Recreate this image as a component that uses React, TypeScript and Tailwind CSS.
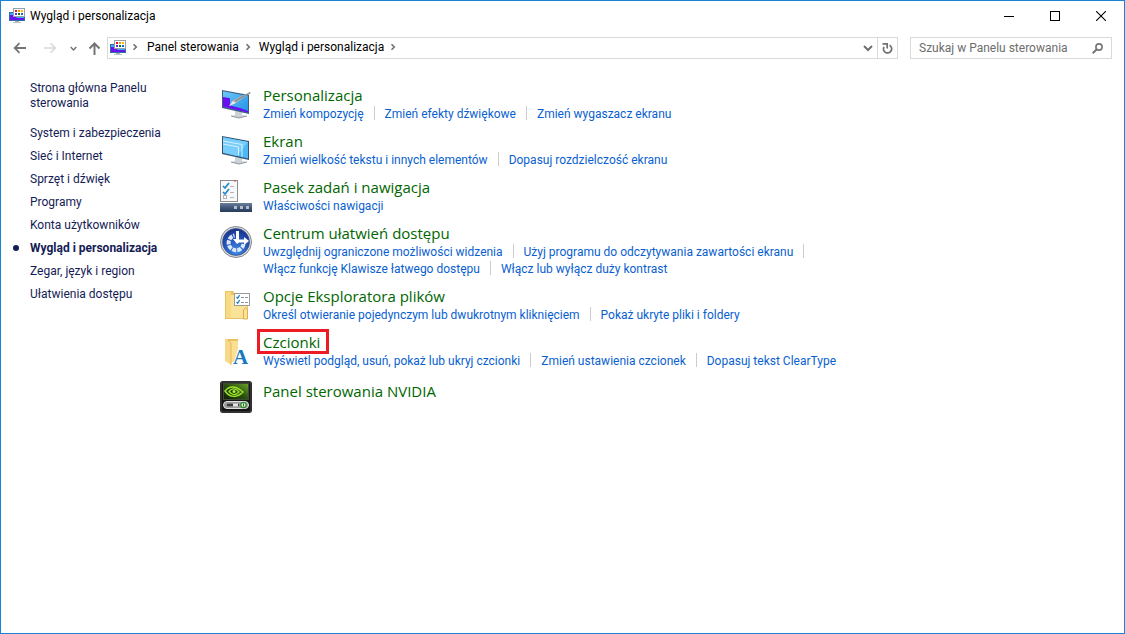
import { useState } from 'react';
import type { ReactNode } from 'react';

type Category = {
  title: string;
  icon: ReactNode;
  links: string[];
  marked?: boolean;
};

const sidebarLinks = [
  'System i zabezpieczenia',
  'Sieć i Internet',
  'Sprzęt i dźwięk',
  'Programy',
  'Konta użytkowników',
  'Wygląd i personalizacja',
  'Zegar, język i region',
  'Ułatwienia dostępu',
];

function PanelIcon() {
  return (
    <svg width="16" height="16" viewBox="0 0 16 16" className="shrink-0" aria-hidden="true">
      <rect x="0" y="4" width="16" height="9" fill="#2f6f9f" />
      <rect x="1" y="5" width="14" height="7" fill="#35b0f5" />
      <path d="M1 7h4l3 3h7v2H1z" fill="#6a11f0" />
      <rect x="6" y="13" width="4" height="1" fill="#9fb2bf" />
      <rect x="4" y="14" width="8" height="1" fill="#b9c4cc" />
      <rect x="4.5" y="0.5" width="11" height="8" fill="#fff" stroke="#98a0a8" />
      <rect x="6" y="2" width="2" height="2" fill="#e81123" />
      <rect x="9" y="2" width="2" height="2" fill="#ff8c00" />
      <rect x="12" y="2" width="2" height="2" fill="#ffb900" />
      <rect x="6" y="5" width="2" height="2" fill="#5b2ee0" />
      <rect x="9" y="5" width="2" height="2" fill="#107c10" />
      <rect x="12" y="5" width="2" height="2" fill="#1464d2" />
    </svg>
  );
}

function Chevron() {
  return (
    <svg width="6" height="8" viewBox="0 0 6 8" className="shrink-0" aria-hidden="true">
      <path d="M1.5 1.2 4.3 4 1.5 6.8" fill="none" stroke="#707070" strokeWidth="1.6" />
    </svg>
  );
}

function ChevronDown({ size }: { size: number }) {
  return (
    <svg width={size} height={size} viewBox="0 0 10 10" aria-hidden="true">
      <path d="m1 3 4 4 4-4" fill="none" stroke="#707070" strokeWidth="2" />
    </svg>
  );
}

function MonitorStand() {
  return (
    <>
      <path d="m15 23 7 1v3l5 1-8 2-8-2 4-1z" fill="#cdd2d6" />
      <path d="m11 28 8 2 8-2" fill="none" stroke="#8d969e" />
    </>
  );
}

function PersonalizationIcon() {
  return (
    <svg width="32" height="32" viewBox="0 0 32 32" aria-hidden="true">
      <defs>
        <linearGradient id="screen" x1="0" y1="0" x2="1" y2="1">
          <stop offset="0" stopColor="#6cc8fa" />
          <stop offset="1" stopColor="#2391e6" />
        </linearGradient>
      </defs>
      <MonitorStand />
      <path d="M2 2 29 7v19L2 20z" fill="#3c5f7c" />
      <path d="M3 3.3 28 8v16.500L3 18.800z" fill="url(#screen)" />
      <path d="m3 9 7 1.200v7.300l10 2.500 8 3v1.500L3 18.800z" fill="#6a0df0" />
      <path d="m9 18 4-6L30 4l1 1-15 10z" fill="#a7afb6" />
      <path d="m9 18 4-5 3 2z" fill="#e8ebee" />
      <path d="m15 13 15-8" stroke="#66717a" strokeWidth=".7" />
    </svg>
  );
}

function DisplayIcon() {
  return (
    <svg width="32" height="32" viewBox="0 0 32 32" aria-hidden="true">
      <MonitorStand />
      <path d="M2 2 29 7v19L2 20z" fill="#34536c" />
      <path d="M3 3.300 28 8v16.500L3 18.800z" fill="#4db8f5" />
      <path d="m3 3.300 25 4.700-11 14-14-3.200z" fill="#79cdfa" />
      <path d="m3 7 19 3.500v12.300M3 10l15.500 3v8.500" fill="none" stroke="#d8f1ff" />
    </svg>
  );
}

function TaskbarIcon() {
  return (
    <svg width="32" height="32" viewBox="0 0 32 32" aria-hidden="true">
      <defs>
        <linearGradient id="taskbar" x2="0" y2="1">
          <stop offset="0" stopColor="#6b7f99" />
          <stop offset=".5" stopColor="#41587a" />
          <stop offset="1" stopColor="#263a58" />
        </linearGradient>
      </defs>
      <rect x=".5" y=".5" width="17" height="21" fill="#f7f8f9" stroke="#8c8c8c" />
      <path d="M14 1h2" stroke="#d24b3e" />
      <path d="m3 6 2 2 4-5M3 12l2 2 4-5" fill="none" stroke="#2288c9" strokeWidth="1.700" />
      <rect x="3.500" y="15.500" width="3" height="3" fill="#fff" stroke="#b3b3b3" />
      <path d="M10 6.500h4M10 12.500h4M10 17.500h4" stroke="#b5b5b5" />
      <rect y="23" width="32" height="9" fill="url(#taskbar)" />
      <path d="M14 26h3v3h-3zM20 26h3v3h-3zM26 26h3v3h-3z" fill="#b3bdca" />
    </svg>
  );
}

function EaseOfAccessIcon() {
  return (
    <svg width="32" height="32" viewBox="0 0 32 32" aria-hidden="true">
      <defs>
        <radialGradient id="ease" cx=".5" cy=".85" r=".8">
          <stop offset="0" stopColor="#3f8ae8" />
          <stop offset=".6" stopColor="#2452b8" />
          <stop offset="1" stopColor="#1b3690" />
        </radialGradient>
      </defs>
      <circle cx="16" cy="16" r="15.500" fill="#d7dadd" stroke="#858b92" />
      <circle cx="16" cy="16" r="13.500" fill="url(#ease)" stroke="#3d4f7c" strokeWidth=".7" />
      <path
        d="M23.500 18a7.500 7.500 0 1 1-9-8.500"
        fill="none"
        stroke="#dce8f6"
        strokeWidth="4"
        strokeDasharray="4 1.100"
      />
      <path d="M16 5h3v8.500h5V11l5 4-5 4v-2.500h-5L17 18l-4-5h3z" fill="#fff" />
    </svg>
  );
}

function ExplorerOptionsIcon() {
  return (
    <svg width="32" height="32" viewBox="0 0 32 32" aria-hidden="true">
      <path d="M5 2h8l2 3h13v25H5z" fill="#e9c35f" />
      <path d="M6 3h5v26H6z" fill="#f7da85" />
      <path d="M11 6h16v23H11z" fill="#fbe299" />
      <path d="M23.500 30v-9l2-2.500 2 2.500v9z" fill="#fbe299" stroke="#dfb14c" />
      <rect x="14.500" y="4.500" width="15" height="12" fill="#fff" stroke="#9a9a9a" />
      <path d="m16.500 8 1.200 1.200 2-3M16.500 13l1.200 1.200 2-3" fill="none" stroke="#2080c4" strokeWidth="1.200" />
      <path d="M21 8.500h3M25 8.500h3M21 13.500h3M25 13.500h3" stroke="#8c959d" />
    </svg>
  );
}

function FontsIcon() {
  return (
    <svg width="32" height="32" viewBox="0 0 32 32" className="overflow-visible" aria-hidden="true">
      <path d="M8 4h10v9l-4 12-3 3z" fill="#eac162" />
      <path d="M10 6h8v7l-4 14h-4z" fill="#fbe093" />
      <path d="M5 4h2l4 4v22l-6-4z" fill="#f8d98a" />
      <path d="m7 4 4 4v22" fill="none" stroke="#e0b251" strokeWidth=".8" />
      <text
        x="13"
        y="29"
        fontFamily="'Liberation Serif', serif"
        fontSize="21"
        fontWeight="700"
        fill="#1679c0"
      >
        A
      </text>
    </svg>
  );
}

function NvidiaIcon() {
  return (
    <svg width="32" height="32" viewBox="0 0 32 32" aria-hidden="true">
      <defs>
        <linearGradient id="nv" x1="1" y1="0" x2="0" y2="1">
          <stop offset="0" stopColor="#6ba32c" />
          <stop offset=".5" stopColor="#2a4f10" />
          <stop offset="1" stopColor="#0e1c06" />
        </linearGradient>
      </defs>
      <rect width="32" height="32" rx="3" fill="#151515" />
      <rect x="1" y="1" width="30" height="30" rx="2" fill="none" stroke="#4d4d4d" />
      <rect x="3.500" y="2.500" width="25" height="16" fill="url(#nv)" stroke="#3c4a34" />
      <path
        d="M5 10C9 5 15 4 23 11c-6 6-13 6-18-1z"
        fill="none"
        stroke="#9be22a"
        strokeWidth="1.500"
      />
      <path d="M9 10.500c3-4 7-3 10 .5-4 4-7 3-10-.5z" fill="none" stroke="#9be22a" strokeWidth="1.300" />
      <circle cx="14" cy="10.500" r="1.500" fill="#b4f03e" />
      <rect x="3.500" y="20.500" width="25" height="7" rx="3.500" fill="#9a9a9a" stroke="#e0e0e0" />
      <path d="M8 24h10" stroke="#3c3c3c" strokeWidth="2.500" strokeLinecap="round" />
      <path d="M13 22.500h5v3h-5z" fill="#e4e4e4" />
      <circle cx="23.500" cy="24" r="2.700" fill="#dff5d5" stroke="#2d8a2d" strokeWidth="1.300" />
      <path d="M23.500 22.500v3" stroke="#226b22" />
    </svg>
  );
}

const categories: Category[] = [
  {
    title: 'Personalizacja',
    icon: <PersonalizationIcon />,
    links: ['Zmień kompozycję', 'Zmień efekty dźwiękowe', 'Zmień wygaszacz ekranu'],
  },
  {
    title: 'Ekran',
    icon: <DisplayIcon />,
    links: ['Zmień wielkość tekstu i innych elementów', 'Dopasuj rozdzielczość ekranu'],
  },
  {
    title: 'Pasek zadań i nawigacja',
    icon: <TaskbarIcon />,
    links: ['Właściwości nawigacji'],
  },
  {
    title: 'Centrum ułatwień dostępu',
    icon: <EaseOfAccessIcon />,
    links: [
      'Uwzględnij ograniczone możliwości widzenia',
      'Użyj programu do odczytywania zawartości ekranu',
      'Włącz funkcję Klawisze łatwego dostępu',
      'Włącz lub wyłącz duży kontrast',
    ],
  },
  {
    title: 'Opcje Eksploratora plików',
    icon: <ExplorerOptionsIcon />,
    links: [
      'Określ otwieranie pojedynczym lub dwukrotnym kliknięciem',
      'Pokaż ukryte pliki i foldery',
    ],
  },
  {
    title: 'Czcionki',
    icon: <FontsIcon />,
    links: [
      'Wyświetl podgląd, usuń, pokaż lub ukryj czcionki',
      'Zmień ustawienia czcionek',
      'Dopasuj tekst ClearType',
    ],
    marked: true,
  },
  { title: 'Panel sterowania NVIDIA', icon: <NvidiaIcon />, links: [] },
];

function TitleBar() {
  return (
    <header className="flex h-[29px] items-center pl-2">
      <PanelIcon />
      <h1 className="ml-[5px] flex-1 text-black">Wygląd i personalizacja</h1>
      <button aria-label="Minimalizuj" className="flex h-full w-[46px] items-center justify-center">
        <svg width="10" height="10" viewBox="0 0 10 10">
          <path d="M0 5.500h10" stroke="#000" />
        </svg>
      </button>
      <button aria-label="Maksymalizuj" className="flex h-full w-[46px] items-center justify-center">
        <svg width="10" height="10" viewBox="0 0 10 10">
          <rect x=".5" y=".5" width="9" height="9" fill="none" stroke="#000" />
        </svg>
      </button>
      <button aria-label="Zamknij" className="flex h-full w-[46px] items-center justify-center">
        <svg width="10" height="10" viewBox="0 0 10 10">
          <path d="m0 0 10 10M10 0 0 10" stroke="#000" strokeWidth="1.100" />
        </svg>
      </button>
    </header>
  );
}

function Toolbar() {
  const [query, setQuery] = useState('');

  return (
    <div className="mt-[7px] flex h-[22px] items-center pr-3 pl-3">
      <button aria-label="Wstecz" className="w-[14px]">
        <svg width="14" height="12" viewBox="0 0 14 12">
          <path d="M13 6H2M6.500 1.200 1.700 6l4.800 4.800" fill="none" stroke="#757575" strokeWidth="1.800" />
        </svg>
      </button>
      <button aria-label="Dalej" className="ml-4 w-[14px]" disabled>
        <svg width="14" height="12" viewBox="0 0 14 12">
          <path d="M1 6h11M7.500 1.200 12.300 6l-4.800 4.800" fill="none" stroke="#d9d9d9" strokeWidth="1.600" />
        </svg>
      </button>
      <button aria-label="Ostatnie lokalizacje" className="ml-[13px] w-[7px]">
        <ChevronDown size={7} />
      </button>
      <button aria-label="W górę" className="ml-[11px] w-[13px]">
        <svg width="13" height="13" viewBox="0 0 13 13">
          <path d="M6.500 13V2M1.500 6.500l5-5 5 5" fill="none" stroke="#757575" strokeWidth="2" />
        </svg>
      </button>

      {/* Address bar */}
      <div className="ml-[6px] flex h-full flex-1 items-center border border-[#d9d9d9] pl-[2px]">
        <PanelIcon />
        <nav aria-label="Ścieżka" className="flex flex-1 items-center pb-[2px] pl-[6px] text-black">
          <Chevron />
          <a href="#panel" className="ml-[9px]">Panel sterowania</a>
          <span className="ml-[6px]"><Chevron /></span>
          <a href="#wyglad" className="ml-2">Wygląd i personalizacja</a>
          <span className="ml-[6px]"><Chevron /></span>
        </nav>
        <button aria-label="Poprzednie lokalizacje" className="flex w-[18px] justify-center">
          <ChevronDown size={10} />
        </button>
        <button
          aria-label="Odśwież"
          className="flex h-full w-5 items-center justify-center border-l border-[#d9d9d9]"
        >
          <svg width="11" height="12" viewBox="0 0 11 12">
            <path d="M7.500 3.200A4.100 4.100 0 1 1 2 4.800" fill="none" stroke="#707070" strokeWidth="1.700" />
            <path d="M.5 1.800h4.700v4.700" fill="none" stroke="#707070" strokeWidth="1.700" />
          </svg>
        </button>
      </div>

      {/* Search */}
      <div className="ml-3 flex h-full w-[202px] items-center border border-[#d9d9d9] pr-2 pl-2">
        <input
          type="text"
          aria-label="Szukaj w Panelu sterowania"
          placeholder="Szukaj w Panelu sterowania"
          value={query}
          onChange={(e) => setQuery(e.target.value)}
          className="min-w-0 flex-1 text-black outline-none placeholder:text-[#6d6d6d]"
        />
        <svg width="11" height="11" viewBox="0 0 11 11" aria-hidden="true">
          <circle cx="7" cy="4" r="3.100" fill="none" stroke="#757575" strokeWidth="1.600" />
          <path d="M4.800 6.200.7 10.300" stroke="#757575" strokeWidth="2" />
        </svg>
      </div>
    </div>
  );
}

function Sidebar() {
  return (
    <nav aria-label="Panel sterowania" className="w-[211px] shrink-0 pt-[22px] pl-[29px] text-[#151c55]">
      <a href="#start" className="block w-[130px] leading-[15px]">
        Strona główna Panelu sterowania
      </a>
      <ul className="mt-[11px]">
        {sidebarLinks.map((label) => {
          const active = label === 'Wygląd i personalizacja';
          return (
            <li key={label} className="relative leading-[23px]">
              {active && <span className="absolute top-2 -left-[17px] size-[6px] rounded-full bg-[#151c55]" />}
              <a href="#kategoria" className={active ? 'font-bold' : ''}>{label}</a>
            </li>
          );
        })}
      </ul>
    </nav>
  );
}

function CategoryRow({ category }: { category: Category }) {
  const { title, icon, links, marked } = category;

  return (
    <section className="flex gap-[11px] pb-[9px]">
      <div className="w-8 shrink-0 pt-[2px]">{icon}</div>
      <div className={links.length ? '' : 'pt-[3px]'}>
        <h2 className="pb-[2px] font-['Open_Sans','Noto_Sans',sans-serif] text-[15px] leading-[18px] text-[#006600]">
          <a href="#ustawienia" className="relative block w-fit">
            {title}
            {marked && (
              <span className="absolute -top-1 -right-[9px] -bottom-[3px] -left-[6px] z-10 border-3 border-[#ed1c24]" />
            )}
          </a>
        </h2>
        <ul className="flex flex-wrap leading-[17px] text-[#0a5fd0]">
          {links.map((link, i) => (
            <li key={link} className="flex">
              <a href="#zadanie" className="whitespace-nowrap">{link}</a>
              {i < links.length - 1 && <span className="mr-[10px] ml-[10px] h-[14px] w-px bg-[#ccc]" />}
            </li>
          ))}
        </ul>
      </div>
    </section>
  );
}

export default function App() {
  return (
    <div className="flex min-h-screen flex-col border border-[#1883d7] bg-white font-['Roboto','Noto_Sans',sans-serif] text-[12px] leading-4">
      <TitleBar />
      <Toolbar />
      <div className="flex flex-1">
        <Sidebar />
        <main className="max-w-[670px] flex-1 pt-[27px] pl-2">
          {categories.map((category) => (
            <CategoryRow key={category.title} category={category} />
          ))}
        </main>
      </div>
    </div>
  );
}
